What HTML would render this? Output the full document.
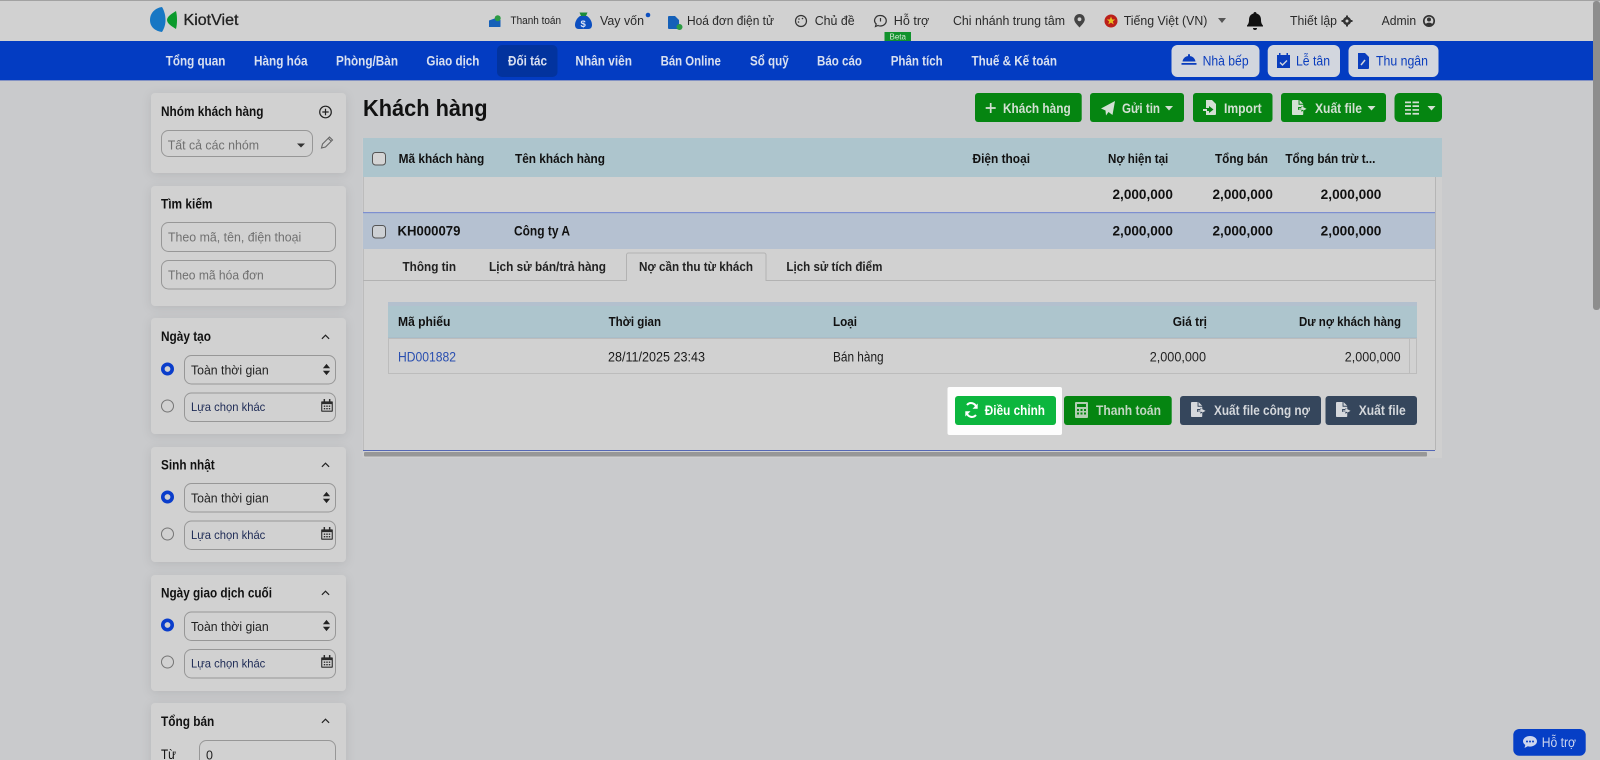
<!DOCTYPE html>
<html lang="vi"><head><meta charset="utf-8"><title>Khách hàng - KiotViet</title>
<style>
html,body{margin:0;padding:0;width:1600px;height:760px;overflow:hidden;background:#c9cacc}
svg{display:block;font-family:"Liberation Sans",sans-serif;filter:blur(.3px)}
text{font-size:13.5px;fill:#111}
.b{font-weight:700}
.top{font-size:13px;fill:#2a2a2a}
.nav{font-size:13.5px;font-weight:700;fill:#d9e0f0}
.act{font-size:13.5px;font-weight:700;fill:#d3e0d3}
.sel{font-size:12.5px;fill:#222}
.ph{font-size:13px;fill:#707070}
.alt{font-size:12px;fill:#1d2a55}
.dk{font-size:13.5px;font-weight:700;fill:#d5d8dc}
.card{fill:#d1d1d1;filter:drop-shadow(0 2px 5px rgba(0,0,0,.09))}
.inp{fill:none;stroke:#979797;stroke-width:1}
</style></head><body>
<svg width="1600" height="760" viewBox="0 0 1600 760" xmlns="http://www.w3.org/2000/svg">
<defs>
<symbol id="exp" viewBox="0 0 16 16" overflow="visible"><path d="M1 0H7V5H12V7.5H6.5V10.5H12V15a1 1 0 0 1-1 1H1a1 1 0 0 1-1-1V1a1 1 0 0 1 1-1zM8 0l4 4H8z M10 6.5v2.4H7.5v1.2H10v2.400l5.500-3z" fill="currentColor"/></symbol>
<symbol id="stp" viewBox="0 0 10 14"><path d="M5 0l4.500 5.500H.5zM5 14L.5 8.500h9z" fill="#222"/></symbol>
<symbol id="cal" viewBox="0 0 13 14"><path d="M1 2.500h11a.8.8 0 0 1 .8.8V13a.8.8 0 0 1-.8.8H1a.8.8 0 0 1-.8-.8V3.300a.8.8 0 0 1 .8-.8zM1.400 5.500v7h10.200v-7z" fill="#2b2b2b" fill-rule="evenodd"/><rect x="2.800" y="0" width="1.600" height="3.500" fill="#2b2b2b"/><rect x="8.600" y="0" width="1.600" height="3.500" fill="#2b2b2b"/><path d="M3 7h1.600v1.500H3zM5.700 7h1.600v1.500H5.700zM8.400 7H10v1.500H8.400zM3 9.700h1.600v1.500H3zM5.700 9.700h1.600v1.500H5.700zM8.400 9.700H10v1.500H8.400z" fill="#2b2b2b"/></symbol>
<symbol id="chev" viewBox="0 0 10 6"><path d="M1 5l4-4 4 4" fill="none" stroke="#222" stroke-width="1.300"/></symbol>
</defs>

<rect width="1600" height="760" fill="#c9cacc"/>

<!-- top bar -->
<rect width="1593" height="41" fill="#d1d1d1"/>
<rect width="1600" height="1" fill="#a2a2a2"/>
<path d="M162 7C155 8 150 13 150 20S155 31 162 32C164.500 28 165.500 24 165.500 20S164.500 11 162 7z" fill="#1777c4"/>
<path d="M176 11C172 13.500 167 16.500 167 20S172 26.500 176 29C176.800 26 177 23 177 20S176.800 14 176 11z" fill="#0a9a2c"/>
<text x="183.500" y="25" style="font-size:15.500px;fill:#222;stroke:#222;stroke-width:.3px" textLength="55" lengthAdjust="spacingAndGlyphs">KiotViet</text>

<path d="M489 20.500l7-2.500v2h4.500v6.500a.5.5 0 0 1-.5.5h-11z" fill="#1560b8"/><circle cx="497.700" cy="18.300" r="3" fill="#2c9a44"/>
<text x="510.500" y="24" style="font-size:11px;fill:#222" textLength="50.500" lengthAdjust="spacingAndGlyphs">Thanh toán</text>
<path d="M580 16h7c3.500 2.500 5 6 5 9 0 2.500-1.500 4-3.500 4h-10c-2 0-3.500-1.500-3.500-4 0-3 1.500-6.500 5-9z" fill="#0c4fc0"/><path d="M579.500 12.500h8l-1.500 3.500h-5z" fill="#1a8a3a"/><text x="580.500" y="27" style="font-size:9.500px;font-weight:700;fill:#d8e2f5">$</text>
<text class="top" x="600" y="25" textLength="44" lengthAdjust="spacingAndGlyphs">Vay vốn</text>
<circle cx="648" cy="15" r="2.300" fill="#0c4fc0"/>
<path d="M668 17a1 1 0 0 1 1-1h6l4 4v9h-10a1 1 0 0 1-1-1z" fill="#1560b8"/><circle cx="679.500" cy="27" r="3" fill="#2c9a44"/>
<text class="top" x="687" y="25" textLength="87" lengthAdjust="spacingAndGlyphs">Hoá đơn điện tử</text>
<circle cx="801" cy="21" r="5.500" fill="none" stroke="#333" stroke-width="1.200"/><circle cx="799" cy="19" r=".8" fill="#333"/><circle cx="802.500" cy="18.500" r=".8" fill="#333"/><circle cx="798.500" cy="22" r=".8" fill="#333"/>
<text class="top" x="814.700" y="25" textLength="40" lengthAdjust="spacingAndGlyphs">Chủ đề</text>
<path d="M880.500 15.500a5.500 5 0 0 1 0 10.500c-1 0-2 0-2.500-.5l-2.500 1 .7-2.500a5.500 5 0 0 1 4.300-8.500z" fill="none" stroke="#333" stroke-width="1.200"/><path d="M880.500 18v3.500" stroke="#333" stroke-width="1.200"/>
<text class="top" x="893.800" y="25" textLength="35.500" lengthAdjust="spacingAndGlyphs">Hỗ trợ</text>
<rect x="884.500" y="32" width="26.500" height="9" fill="#11922c"/>
<text x="889.500" y="39.500" style="font-size:8px;fill:#d5e8d5" textLength="16.500" lengthAdjust="spacingAndGlyphs">Beta</text>
<text class="top" x="953" y="25" textLength="112" lengthAdjust="spacingAndGlyphs">Chi nhánh trung tâm</text>
<path d="M1079.500 14a5.300 5.300 0 0 1 5.300 5.300c0 3-3 5.500-5.300 8.200-2.300-2.700-5.300-5.200-5.300-8.200a5.300 5.300 0 0 1 5.300-5.300z" fill="#444"/><circle cx="1079.500" cy="19.300" r="1.900" fill="#d1d1d1"/>
<circle cx="1111" cy="21" r="6.500" fill="#bb1f1a"/><path d="M1111 16.500l1.200 3h3l-2.400 1.900.9 3-2.700-1.800-2.700 1.800.9-3-2.400-1.900h3z" fill="#e8c020"/>
<text class="top" x="1123.700" y="25" textLength="83.700" lengthAdjust="spacingAndGlyphs">Tiếng Việt (VN)</text>
<path d="M1218 18h8l-4 5z" fill="#555"/>
<path d="M1255 12c1 0 1.500.7 1.500 1.500 3 .7 4.500 3 4.500 6.500 0 3 1 4.500 2 5.500v1h-16v-1c1-1 2-2.500 2-5.500 0-3.500 1.500-5.800 4.500-6.500 0-.8.500-1.500 1.500-1.500zM1253 28h4a2 2 0 0 1-4 0z" fill="#111"/>
<text class="top" x="1290" y="25" textLength="47" lengthAdjust="spacingAndGlyphs">Thiết lập</text>
<circle cx="1347" cy="21" r="2.800" fill="none" stroke="#333" stroke-width="2.600"/><path d="M1346 15.500h2v2h-2zM1346 24.500h2v2h-2zM1341.500 20h2v2h-2zM1350.500 20h2v2h-2z" fill="#333"/>
<text class="top" x="1381.600" y="25" textLength="34.500" lengthAdjust="spacingAndGlyphs">Admin</text>
<circle cx="1429" cy="21" r="5.200" fill="none" stroke="#333" stroke-width="1.700"/><circle cx="1429" cy="19.500" r="2" fill="#333"/><path d="M1425.500 24.500a3.800 3 0 0 1 7 0l-3.500 1.500z" fill="#333"/>

<!-- nav -->
<rect y="41" width="1593" height="39" fill="#033cc2"/>
<rect y="80" width="1593" height="1" fill="#8392c4"/>
<rect x="497" y="45" width="60.500" height="32" rx="5" fill="#02339e"/>
<text class="nav" x="165.700" y="65.500" textLength="59.700" lengthAdjust="spacingAndGlyphs">Tổng quan</text>
<text class="nav" x="254" y="65.500" textLength="53.600" lengthAdjust="spacingAndGlyphs">Hàng hóa</text>
<text class="nav" x="336" y="65.500" textLength="62" lengthAdjust="spacingAndGlyphs">Phòng/Bàn</text>
<text class="nav" x="426.400" y="65.500" textLength="53" lengthAdjust="spacingAndGlyphs">Giao dịch</text>
<text class="nav" x="508" y="65.500" textLength="39" lengthAdjust="spacingAndGlyphs">Đối tác</text>
<text class="nav" x="575.400" y="65.500" textLength="56.600" lengthAdjust="spacingAndGlyphs">Nhân viên</text>
<text class="nav" x="660.600" y="65.500" textLength="60.200" lengthAdjust="spacingAndGlyphs">Bán Online</text>
<text class="nav" x="750" y="65.500" textLength="38.700" lengthAdjust="spacingAndGlyphs">Sổ quỹ</text>
<text class="nav" x="817" y="65.500" textLength="45" lengthAdjust="spacingAndGlyphs">Báo cáo</text>
<text class="nav" x="890.700" y="65.500" textLength="52" lengthAdjust="spacingAndGlyphs">Phân tích</text>
<text class="nav" x="971.500" y="65.500" textLength="85.500" lengthAdjust="spacingAndGlyphs">Thuế &amp; Kế toán</text>

<rect x="1171.500" y="45" width="88" height="32" rx="6" fill="#d2d6de"/>
<rect x="1267.700" y="45" width="72.300" height="32" rx="6" fill="#d2d6de"/>
<rect x="1348.500" y="45" width="90" height="32" rx="6" fill="#d2d6de"/>
<path d="M1189 56c3.500 0 6 2.300 6.500 5.500h-13c.5-3.200 3-5.500 6.500-5.500z M1188 55a1 1 0 0 1 2 0v1.500h-2z M1181.500 63h15v1.700h-15z" fill="#0a3dbd"/>
<text x="1202.600" y="65.500" style="font-size:13.500px;fill:#0a3dbd" textLength="46" lengthAdjust="spacingAndGlyphs">Nhà bếp</text>
<path d="M1277 55h13v13h-13z M1279 53h1.500v3H1279zM1286.500 53h1.500v3h-1.500z" fill="#0a3dbd"/><path d="M1280 62.500l2.500 2.500 4.500-4.500" fill="none" stroke="#d2d6de" stroke-width="1.400"/>
<text x="1296" y="65.500" style="font-size:13.500px;fill:#0a3dbd" textLength="34" lengthAdjust="spacingAndGlyphs">Lễ tân</text>
<path d="M1358 53h7l4 4v11a1 1 0 0 1-1 1h-10z" fill="#0a3dbd"/><path d="M1361 65l4-5" stroke="#d2d6de" stroke-width="1.500"/>
<text x="1376" y="65.500" style="font-size:13.500px;fill:#0a3dbd" textLength="52" lengthAdjust="spacingAndGlyphs">Thu ngân</text>

<!-- page scrollbar -->
<rect x="1593" y="1" width="7" height="309" rx="3" fill="#8d8d8d"/>

<!-- sidebar -->
<rect class="card" x="151" y="93" width="195" height="80" rx="4"/>
<text class="b" x="161" y="116" textLength="102.500" lengthAdjust="spacingAndGlyphs">Nhóm khách hàng</text>
<circle cx="325.500" cy="112" r="5.800" fill="none" stroke="#222" stroke-width="1.200"/><path d="M325.500 108.800v6.400M322.300 112h6.400" stroke="#222" stroke-width="1.200"/>
<rect class="inp" x="161.500" y="130.500" width="151" height="26" rx="7"/>
<text class="ph" x="167.700" y="149.500" textLength="91.300" lengthAdjust="spacingAndGlyphs">Tất cả các nhóm</text>
<path d="M297 143.500h8l-4 4z" fill="#333"/>
<path d="M321.500 148l1-4 7-7 3 3-7 7zM328 138l3 3" fill="none" stroke="#666" stroke-width="1.100"/>

<rect class="card" x="151" y="186" width="195" height="120" rx="4"/>
<text class="b" x="161" y="208.500" textLength="51.500" lengthAdjust="spacingAndGlyphs">Tìm kiếm</text>
<rect class="inp" x="161.500" y="222.500" width="174" height="29" rx="7"/>
<text class="ph" x="168" y="241.500" textLength="133.300" lengthAdjust="spacingAndGlyphs">Theo mã, tên, điện thoại</text>
<rect class="inp" x="161.500" y="260.500" width="174" height="28.500" rx="7"/>
<text class="ph" x="168" y="279.500" textLength="95.700" lengthAdjust="spacingAndGlyphs">Theo mã hóa đơn</text>

<rect class="card" x="151" y="318" width="195" height="116" rx="4"/>
<text class="b" x="161" y="341" textLength="50" lengthAdjust="spacingAndGlyphs">Ngày tạo</text>
<use href="#chev" x="321" y="334" width="9" height="6"/>
<circle cx="167.500" cy="369" r="4.700" fill="none" stroke="#0a3dcb" stroke-width="3.600"/>
<rect class="inp" x="184.500" y="355.500" width="151" height="28.500" rx="7"/>
<text class="sel" x="191" y="374.500" textLength="77.700" lengthAdjust="spacingAndGlyphs">Toàn thời gian</text>
<use href="#stp" x="322.500" y="363" width="8" height="13"/>
<circle cx="167.500" cy="406" r="6" fill="none" stroke="#757575" stroke-width="1"/>
<rect class="inp" x="184.500" y="393" width="151" height="28.500" rx="7"/>
<text class="alt" x="191" y="411" textLength="74.300" lengthAdjust="spacingAndGlyphs">Lựa chọn khác</text>
<use href="#cal" x="321" y="399" width="12" height="13"/>

<rect class="card" x="151" y="447" width="195" height="115" rx="4"/>
<text class="b" x="161" y="469.500" textLength="53.700" lengthAdjust="spacingAndGlyphs">Sinh nhật</text>
<use href="#chev" x="321" y="462" width="9" height="6"/>
<circle cx="167.500" cy="497" r="4.700" fill="none" stroke="#0a3dcb" stroke-width="3.600"/>
<rect class="inp" x="184.500" y="483.500" width="151" height="28.500" rx="7"/>
<text class="sel" x="191" y="502.500" textLength="77.700" lengthAdjust="spacingAndGlyphs">Toàn thời gian</text>
<use href="#stp" x="322.500" y="491" width="8" height="13"/>
<circle cx="167.500" cy="534" r="6" fill="none" stroke="#757575" stroke-width="1"/>
<rect class="inp" x="184.500" y="521" width="151" height="28.500" rx="7"/>
<text class="alt" x="191" y="539" textLength="74.300" lengthAdjust="spacingAndGlyphs">Lựa chọn khác</text>
<use href="#cal" x="321" y="527" width="12" height="13"/>

<rect class="card" x="151" y="575" width="195" height="116" rx="4"/>
<text class="b" x="161" y="597.500" textLength="111" lengthAdjust="spacingAndGlyphs">Ngày giao dịch cuối</text>
<use href="#chev" x="321" y="590" width="9" height="6"/>
<circle cx="167.500" cy="625" r="4.700" fill="none" stroke="#0a3dcb" stroke-width="3.600"/>
<rect class="inp" x="184.500" y="612" width="151" height="28.500" rx="7"/>
<text class="sel" x="191" y="631" textLength="77.700" lengthAdjust="spacingAndGlyphs">Toàn thời gian</text>
<use href="#stp" x="322.500" y="619" width="8" height="13"/>
<circle cx="167.500" cy="662" r="6" fill="none" stroke="#757575" stroke-width="1"/>
<rect class="inp" x="184.500" y="649.500" width="151" height="28.500" rx="7"/>
<text class="alt" x="191" y="667.500" textLength="74.300" lengthAdjust="spacingAndGlyphs">Lựa chọn khác</text>
<use href="#cal" x="321" y="655" width="12" height="13"/>

<rect class="card" x="151" y="703" width="195" height="80" rx="4"/>
<text class="b" x="161" y="726" textLength="53.300" lengthAdjust="spacingAndGlyphs">Tổng bán</text>
<use href="#chev" x="321" y="718" width="9" height="6"/>
<text x="161" y="759" textLength="15" lengthAdjust="spacingAndGlyphs">Từ</text>
<rect class="inp" x="199.500" y="740.500" width="136" height="40" rx="7"/>
<text class="sel" x="206" y="759.500">0</text>

<!-- heading -->
<text class="b" x="363" y="116" style="font-size:23px;fill:#111" textLength="124.600" lengthAdjust="spacingAndGlyphs">Khách hàng</text>

<!-- actions -->
<g fill="#058511">
<rect x="975" y="93" width="106.700" height="29" rx="3"/>
<rect x="1090" y="93" width="94" height="29" rx="3"/>
<rect x="1193" y="93" width="79.500" height="29" rx="3"/>
<rect x="1281" y="93" width="105" height="29" rx="3"/>
<rect x="1394.500" y="93" width="47.500" height="29" rx="5"/>
</g>
<path d="M990.700 103v10M985.700 108h10" stroke="#d3e0d3" stroke-width="1.700"/>
<text class="act" x="1003" y="113" textLength="67.700" lengthAdjust="spacingAndGlyphs">Khách hàng</text>
<path d="M1115 101l-2.500 14-4-3-2.500 3.500-.5-5-4.500-2z" fill="#d3e0d3"/>
<text class="act" x="1122" y="113" textLength="38" lengthAdjust="spacingAndGlyphs">Gửi tin</text>
<path d="M1165 106h8l-4 4.500z" fill="#d3e0d3"/>
<path d="M1206 100h6l4 4v10a1 1 0 0 1-1 1h-9v-4h3v2l4.500-3.500-4.500-3.500v2h-3z M1203 109h4v2h-4z" fill="#d3e0d3"/>
<text class="act" x="1224" y="113" textLength="37.700" lengthAdjust="spacingAndGlyphs">Import</text>
<use href="#exp" x="1292" y="100" width="15" height="15" color="#d3e0d3"/>
<text class="act" x="1315" y="113" textLength="47" lengthAdjust="spacingAndGlyphs">Xuất file</text>
<path d="M1367.500 106h8l-4 4.500z" fill="#d3e0d3"/>
<path d="M1405 101.500h6v1.700h-6zM1412.500 101.500h6.500v1.700h-6.500zM1405 105.300h6v1.700h-6zM1412.500 105.300h6.500v1.700h-6.500zM1405 109.100h6v1.700h-6zM1412.500 109.100h6.500v1.700h-6.500zM1405 112.900h6v1.700h-6zM1412.500 112.900h6.500v1.700h-6.500z" fill="#d3e0d3"/>
<path d="M1427.500 106h8l-4 4.500z" fill="#d3e0d3"/>

<!-- main table -->
<rect x="362.500" y="138" width="1079.500" height="320" fill="#cfcfcf"/>
<rect x="363" y="138" width="1079" height="39" fill="#adc5cd"/>
<rect x="363" y="177" width="1072" height="273" fill="#d1d1d1"/>
<rect x="363" y="177" width="1" height="273" fill="#bcbcbc"/>
<rect x="1435" y="177" width="1" height="273" fill="#b5b5b5"/>
<rect x="372.500" y="152.500" width="13" height="12.500" rx="3" fill="#d4d4d4" stroke="#555"/>
<text class="b" x="398.600" y="163" style="font-size:13px" textLength="85.700" lengthAdjust="spacingAndGlyphs">Mã khách hàng</text>
<text class="b" x="515" y="163" style="font-size:13px" textLength="90" lengthAdjust="spacingAndGlyphs">Tên khách hàng</text>
<text class="b" x="972.500" y="163" style="font-size:13px" textLength="57.500" lengthAdjust="spacingAndGlyphs">Điện thoại</text>
<text class="b" x="1108" y="163" style="font-size:13px" textLength="60.200" lengthAdjust="spacingAndGlyphs">Nợ hiện tại</text>
<text class="b" x="1215" y="163" style="font-size:13px" textLength="52.900" lengthAdjust="spacingAndGlyphs">Tổng bán</text>
<text class="b" x="1285.400" y="163" style="font-size:13px" textLength="90" lengthAdjust="spacingAndGlyphs">Tổng bán trừ t...</text>

<text class="b" x="1112.500" y="199" textLength="60.400" lengthAdjust="spacingAndGlyphs">2,000,000</text>
<text class="b" x="1212.500" y="199" textLength="60.400" lengthAdjust="spacingAndGlyphs">2,000,000</text>
<text class="b" x="1320.700" y="199" textLength="60.700" lengthAdjust="spacingAndGlyphs">2,000,000</text>

<rect x="363" y="212" width="1072" height="37" fill="#b5c1d1"/>
<rect x="363" y="212" width="1072" height="1.200" fill="#7d8fd0"/>
<rect x="372.500" y="225.500" width="13" height="12.500" rx="3" fill="#cdd0d4" stroke="#555"/>
<text class="b" x="397.500" y="235.500" textLength="62.900" lengthAdjust="spacingAndGlyphs">KH000079</text>
<text class="b" x="514" y="235.500" textLength="56" lengthAdjust="spacingAndGlyphs">Công ty A</text>
<text class="b" x="1112.500" y="235.500" textLength="60.400" lengthAdjust="spacingAndGlyphs">2,000,000</text>
<text class="b" x="1212.500" y="235.500" textLength="60.400" lengthAdjust="spacingAndGlyphs">2,000,000</text>
<text class="b" x="1320.700" y="235.500" textLength="60.700" lengthAdjust="spacingAndGlyphs">2,000,000</text>

<!-- tabs -->
<path d="M363 280.500H626.500V255a2 2 0 0 1 2-2H764a2 2 0 0 1 2 2v25.500H1435" fill="none" stroke="#b2b2b2"/>
<text class="b" x="402.500" y="271" style="font-size:13px;fill:#222" textLength="53.500" lengthAdjust="spacingAndGlyphs">Thông tin</text>
<text class="b" x="489" y="271" style="font-size:13px;fill:#222" textLength="117" lengthAdjust="spacingAndGlyphs">Lịch sử bán/trả hàng</text>
<text class="b" x="639" y="271" style="font-size:13px;fill:#222" textLength="114" lengthAdjust="spacingAndGlyphs">Nợ cần thu từ khách</text>
<text class="b" x="786.400" y="271" style="font-size:13px;fill:#222" textLength="96" lengthAdjust="spacingAndGlyphs">Lịch sử tích điểm</text>

<!-- inner table -->
<rect x="388" y="302" width="1029" height="36" fill="#adc5cd"/>
<rect x="388" y="302" width="1029" height="4" fill="#b3c0ce"/>
<rect x="388" y="337.500" width="1029" height="1" fill="#a3b7c6"/>
<rect x="388.500" y="338.500" width="1028" height="35" fill="none" stroke="#bcbcbc"/>
<path d="M1409.500 338v35" stroke="#bcbcbc"/>
<text class="b" x="398" y="326" style="font-size:13px" textLength="52.400" lengthAdjust="spacingAndGlyphs">Mã phiếu</text>
<text class="b" x="608.600" y="326" style="font-size:13px" textLength="52.400" lengthAdjust="spacingAndGlyphs">Thời gian</text>
<text class="b" x="833" y="326" style="font-size:13px" textLength="24" lengthAdjust="spacingAndGlyphs">Loại</text>
<text class="b" x="1172.700" y="326" style="font-size:13px" textLength="34.300" lengthAdjust="spacingAndGlyphs">Giá trị</text>
<text class="b" x="1299" y="326" style="font-size:13px" textLength="102" lengthAdjust="spacingAndGlyphs">Dư nợ khách hàng</text>
<text x="398" y="361.500" style="fill:#2a4fb0" textLength="58" lengthAdjust="spacingAndGlyphs">HD001882</text>
<text x="608" y="361.500" style="fill:#1a1a1a" textLength="97" lengthAdjust="spacingAndGlyphs">28/11/2025 23:43</text>
<text x="833" y="361.500" style="fill:#1a1a1a" textLength="50.600" lengthAdjust="spacingAndGlyphs">Bán hàng</text>
<text x="1149.700" y="361.500" style="fill:#222" textLength="56.300" lengthAdjust="spacingAndGlyphs">2,000,000</text>
<text x="1344.800" y="361.500" style="fill:#222" textLength="55.800" lengthAdjust="spacingAndGlyphs">2,000,000</text>

<!-- detail buttons -->
<rect x="947.500" y="387" width="114.500" height="48" rx="2" fill="#fdfdfd"/>
<rect x="955" y="396" width="101" height="29" rx="3" fill="#0cb63e"/>
<path d="M976.300 407.500a5.300 5.300 0 0 0-9.300-2.500M966.700 412.500a5.300 5.300 0 0 0 9.300 2.500" fill="none" stroke="#fff" stroke-width="2"/><path d="M977.700 403.500v5.200h-5.200zM965.300 416.500v-5.200h5.200z" fill="#fff"/>
<text class="b" x="984.800" y="415" style="fill:#fff" textLength="60.200" lengthAdjust="spacingAndGlyphs">Điều chỉnh</text>

<rect x="1064" y="396" width="107.700" height="29" rx="3" fill="#058511"/>
<path d="M1075 403a1 1 0 0 1 1-1h11a1 1 0 0 1 1 1v14a1 1 0 0 1-1 1h-11a1 1 0 0 1-1-1zM1077 404v3h9v-3zM1077 409v2h2v-2zM1080.500 409v2h2v-2zM1084 409v2h2v-2zM1077 412.500v2h2v-2zM1080.500 412.500v2h2v-2zM1084 412.500v2h2v-2z" fill="#b3ceb3" fill-rule="evenodd"/>
<text class="act" x="1096" y="415" style="fill:#c3d7c3" textLength="65" lengthAdjust="spacingAndGlyphs">Thanh toán</text>

<rect x="1180" y="396" width="141" height="29" rx="3" fill="#35465c"/>
<use href="#exp" x="1191" y="402" width="15" height="15" color="#d5d8dc"/>
<text class="dk" x="1214" y="415" textLength="96" lengthAdjust="spacingAndGlyphs">Xuất file công nợ</text>
<rect x="1325.500" y="396" width="91.500" height="29" rx="3" fill="#35465c"/>
<use href="#exp" x="1336" y="402" width="15" height="15" color="#d5d8dc"/>
<text class="dk" x="1358.700" y="415" textLength="47" lengthAdjust="spacingAndGlyphs">Xuất file</text>

<!-- horizontal scrollbar -->
<rect x="363" y="450" width="1072" height="1" fill="#5568b5"/>
<rect x="364" y="452" width="1063" height="4.500" rx="1" fill="#979797"/>

<!-- support -->
<rect x="1513.300" y="729" width="72.400" height="26.700" rx="6" fill="#063fc6"/>
<path d="M1530 736c3.800 0 7 2.300 7 5.300s-3.200 5.300-7 5.300c-.8 0-1.500-.1-2.200-.3l-3.300 1.700.8-3c-1.500-1-2.300-2.300-2.300-3.700 0-3 3.200-5.300 7-5.300z" fill="#cdd6ee"/><circle cx="1527" cy="741.500" r="1" fill="#063fc6"/><circle cx="1530" cy="741.500" r="1" fill="#063fc6"/><circle cx="1533" cy="741.500" r="1" fill="#063fc6"/>
<text x="1541.700" y="747" style="font-size:13.500px;fill:#cdd6ee" textLength="34.300" lengthAdjust="spacingAndGlyphs">Hỗ trợ</text>
</svg>
</body></html>
